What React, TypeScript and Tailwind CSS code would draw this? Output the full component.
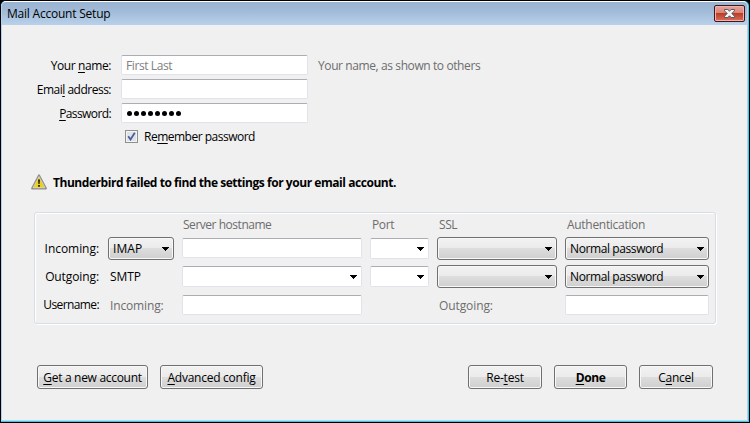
import type { ReactNode } from "react";

function Field({ className = "", children, combo = false }: { className?: string; children?: ReactNode; combo?: boolean }) {
  return (
    <div className={`flex items-center rounded-[2px] border border-[#e2e3ea] border-t-[#abadb3] bg-white ${className}`}>
      {children}
      {combo && <Arrow className="mt-px ml-auto mr-[4px]" />}
    </div>
  );
}

function Arrow({ className = "" }: { className?: string }) {
  return (
    <svg className={className} width="7" height="4" viewBox="0 0 7 4" shapeRendering="crispEdges">
      <path d="M0 0h7v1h-1v1h-1v1h-1v1h-1v-1h-1v-1h-1v-1h-1z" fill="#000" />
    </svg>
  );
}

const face =
  "flex items-center rounded-[3px] border border-[#707070] bg-[linear-gradient(#f2f2f2_0%,#ebebeb_48%,#dddddd_50%,#cfcfcf_100%)] shadow-[inset_0_0_0_1px_#f8f8f8]";

function Select({ className = "", children }: { className?: string; children?: ReactNode }) {
  return (
    <div className={`h-[23px] pl-[4px] pr-[4px] ${face} ${className}`}>
      {children}
      <Arrow className="mt-px ml-auto" />
    </div>
  );
}

function Button({ className = "", children }: { className?: string; children: ReactNode }) {
  return <button className={`h-[24px] justify-center ${face} ${className}`}>{children}</button>;
}

function Key({ children }: { children: string }) {
  return <span className="underline decoration-1 underline-offset-2">{children}</span>;
}

export default function App() {
  return (
    <div className="h-[423px] w-[750px] overflow-hidden bg-black font-['Open_Sans','Noto_Sans',sans-serif] text-[12px] leading-[17px] tracking-[-0.4px] whitespace-nowrap text-black">
      <div className="h-[423px] rounded-t-[6px] border border-black bg-[#35cbea] pr-px pb-px">
        <div className="flex h-[420px] flex-col rounded-t-[5px] border-x border-t border-b border-t-white border-l-[#b5d0ee] border-r-[#b7cfe8] border-b-[#c3d6e8] bg-[#f0f0f0]">
          <header className="flex h-[23px] shrink-0 items-start justify-between rounded-t-[4px] bg-[linear-gradient(#99b4d1,#9fb9d6_35%,#b9d1ea)] pl-[5px] pr-[2px]">
            <span className="mt-[3px] tracking-[-0.22px]">Mail Account Setup</span>
            <div className="mt-[3px] flex h-[17px] w-[31px] items-center justify-center rounded-[2px] border border-[#43141c] bg-[linear-gradient(#e6a49b_0%,#d98477_46%,#bd3c26_50%,#d5705b_100%)] shadow-[inset_0_0_0_1px_#efb3aa]">
              <svg width="11" height="9" viewBox="0 0 11 9">
                <path d="M.5.5h3.300L5.500 2.200 7.200.5h3.300v1.300L7.800 4.500l2.700 2.700v1.300H7.200L5.500 6.800 3.800 8.500H.5V7.200l2.700-2.700L.5 1.800z" fill="#f5f5f5" stroke="#535666" />
              </svg>
            </div>
          </header>

          <main className="flex flex-col pl-[32px] pt-[30px]">
            <section className="flex flex-col gap-[4px]">
              <div className="flex h-[20px] items-center">
                <label className="w-[77px] text-right tracking-[-0.4px]">Your <Key>n</Key>ame:</label>
                <Field className="ml-[10px] h-[20px] w-[187px] pl-[4px] tracking-[-0.4px] text-[#808080]">First Last</Field>
                <span className="ml-[10px] text-[#6d6d6d]">Your name, as shown to others</span>
              </div>
              <div className="flex h-[20px] items-center">
                <label className="w-[77px] text-right tracking-[-0.5px]">Emai<Key>l</Key> address:</label>
                <Field className="ml-[10px] h-[20px] w-[187px]" />
              </div>
              <div className="flex h-[20px] items-center">
                <label className="w-[77px] text-right tracking-[-0.6px]"><Key>P</Key>assword:</label>
                <Field className="ml-[10px] h-[20px] w-[187px] gap-[2px] pl-[5px]">
                  {[0, 1, 2, 3, 4, 5, 6, 7].map((i) => (
                    <i key={i} className="size-[5px] rounded-full bg-black" />
                  ))}
                </Field>
              </div>
            </section>

            <label className="mt-[5px] ml-[91px] flex h-[17px] items-center">
              <span className="flex size-[13px] items-center justify-center border border-[#8e8f8f] bg-[#dfe3e9] shadow-[inset_0_0_0_1px_#f4f4f4]">
                <svg width="9" height="9" viewBox="0 0 9 9">
                  <path d="M1.200 4.300l2.300 3.200L7.800.8" fill="none" stroke="#4a5f97" strokeWidth="1.800" />
                </svg>
              </span>
              <span className="ml-[6px] tracking-[-0.5px]">Re<Key>m</Key>ember password</span>
            </label>

            <div className="mt-[29px] -ml-[3px] flex h-[17px] items-start">
              <svg className="shrink-0" width="16" height="16" viewBox="0 0 16 16">
                <path d="M8 1.200L15 14.500H1z" fill="#f4f4f4" stroke="#8d8d8d" strokeWidth="1.800" strokeLinejoin="round" />
                <path d="M8 2.400L14 13.800H2z" fill="#ecd11c" stroke="#dadada" strokeWidth=".6" />
                <path d="M7 5.500h2L8.600 10H7.400zM7.100 11h1.800v1.700H7.100z" fill="#222" />
              </svg>
              <b className="ml-[6px] tracking-[-0.45px]">Thunderbird failed to find the settings for your email account.</b>
            </div>

            <section className="mt-[21px] grid h-[112px] w-[682px] grid-cols-[65px_66px_180px_59px_120px_144px] grid-rows-[24px_28px_28px_25px] content-start items-start gap-x-[8px] rounded-[3px] border border-[#d5dfe5] shadow-[inset_1px_1px_0_#fff,1px_1px_0_#fff]">
              <span className="col-start-3 mt-[3px] pl-px tracking-[-0.47px] text-[#6d6d6d]">Server hostname</span>
              <span className="mt-[3px] pl-[2px] text-[#6d6d6d]">Port</span>
              <span className="mt-[3px] pl-[2px] text-[#6d6d6d]">SSL</span>
              <span className="mt-[3px] pl-[2px] tracking-[-0.3px] text-[#6d6d6d]">Authentication</span>

              <span className="mt-[3px] pr-px text-right tracking-[-0.05px]">Incoming:</span>
              <Select className="tracking-[0.1px]">IMAP</Select>
              <Field className="mt-px h-[20px]" />
              <Field combo className="mt-px h-[21px]" />
              <Select />
              <Select>Normal password</Select>

              <span className="mt-[3px] pr-px text-right tracking-[-0.1px]">Outgoing:</span>
              <span className="mt-[3px] pl-[2px] tracking-[-0.1px]">SMTP</span>
              <Field combo className="mt-px h-[21px]" />
              <Field combo className="mt-px h-[21px]" />
              <Select />
              <Select>Normal password</Select>

              <span className="mt-[3px] pr-px text-right tracking-[-0.6px]">Username:</span>
              <span className="mt-[4px] pl-[2px] tracking-[-0.15px] text-[#6d6d6d]">Incoming:</span>
              <Field className="mt-[2px] h-[20px]" />
              <span className="col-start-5 mt-[4px] pl-[2px] tracking-[-0.1px] text-[#6d6d6d]">Outgoing:</span>
              <Field className="mt-[2px] h-[20px]" />
            </section>

            <footer className="mt-[41px] ml-[3px] flex gap-[12px]">
              <Button className="w-[111px] tracking-[-0.3px]"><span><Key>G</Key>et a new account</span></Button>
              <Button className="w-[103px] tracking-[-0.25px]"><span><Key>A</Key>dvanced config</span></Button>
              <Button className="ml-[193px] w-[74px] tracking-[-0.2px]"><span>Re-<Key>t</Key>est</span></Button>
              <Button className="w-[73px] font-bold"><span><Key>D</Key>one</span></Button>
              <Button className="w-[74px] tracking-[-0.3px]"><span>C<Key>a</Key>ncel</span></Button>
            </footer>
          </main>
        </div>
      </div>
    </div>
  );
}
